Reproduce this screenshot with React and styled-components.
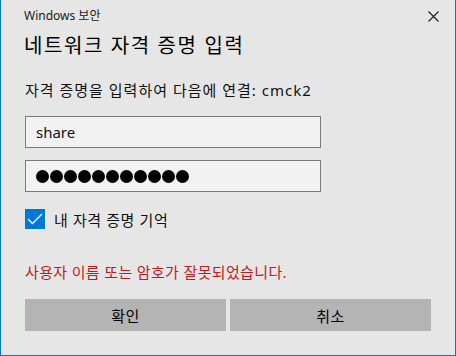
import React from "react";
import styled, { createGlobalStyle } from "styled-components";

const Global = createGlobalStyle`
  html, body { margin: 0; padding: 0; background: #e6e6e6; }
  body { font-family: "Noto Sans", "Noto Sans CJK KR", sans-serif; color: #000; }
  * { box-sizing: border-box; }
`;

const Window = styled.div`
  width: 456px;
  height: 356px;
  background: #e6e6e6;
  border: 1px solid #0078d7;
  border-top: none;
  display: flex;
  flex-direction: column;
  padding: 0 24px 0 24px;
`;

const TitleBar = styled.div`
  display: flex;
  align-items: center;
  justify-content: space-between;
  height: 20px;
  margin-top: 6px;
`;

const TitleText = styled.span`
  font-size: 12px;
  line-height: 20px;
  color: #1a1a1a;
  margin-left: -1px;
`;

const Close = styled.button`
  border: none;
  background: transparent;
  padding: 0;
  width: 11px;
  height: 11px;
  margin-right: -8px;
  display: flex;
  svg { display: block; }
`;

const Heading = styled.h1`
  margin: 6px 0 0 -1px;
  font-size: 20px;
  font-weight: 400;
  line-height: 28px;
  letter-spacing: 1.6px;
  color: #000;
`;

const Subtitle = styled.p`
  margin: 20px 0 0 0;
  font-size: 15px;
  line-height: 20px;
  letter-spacing: 1px;
  color: #111;
`;

const Field = styled.div`
  width: 296px;
  height: 32px;
  border: 1px solid #7a7a7a;
  background: #f2f2f2;
  display: flex;
  align-items: center;
  padding: 0 10px;
  margin-top: ${(p) => p.$top}px;
  font-size: 15px;
  color: #111;
`;

const Dots = styled.div`
  display: flex;
  gap: 1px;
`;

const Dot = styled.span`
  width: 13px;
  height: 13px;
  border-radius: 50%;
  background: #000;
`;

const CheckRow = styled.label`
  display: flex;
  align-items: center;
  gap: 9px;
  margin-top: 17px;
  height: 20px;
  font-size: 15px;
  letter-spacing: 0.6px;
  color: #111;
`;

const Box = styled.span`
  width: 20px;
  height: 20px;
  background: #0078d7;
  display: flex;
  align-items: center;
  justify-content: center;
`;

const ErrorText = styled.p`
  margin: 33px 0 0 0;
  font-size: 15px;
  line-height: 20px;
  letter-spacing: 0.35px;
  color: #c8171b;
`;

const Buttons = styled.div`
  display: grid;
  grid-template-columns: 1fr 1fr;
  gap: 4px;
  margin-top: 17px;
`;

const Button = styled.button`
  height: 32px;
  border: none;
  background: #b4b4b4;
  font-family: inherit;
  font-size: 15px;
  letter-spacing: 0.5px;
  color: #000;
  padding: 0;
`;

export default function App() {
  return (
    <>
      <Global />
      <Window>
        <TitleBar>
          <TitleText>Windows 보안</TitleText>
          <Close aria-label="닫기">
            <svg width="11" height="11" viewBox="0 0 11 11">
              <path d="M0.5 0.5 L10.5 10.5 M10.5 0.5 L0.5 10.5" stroke="#1a1a1a" strokeWidth="1.1" fill="none" />
            </svg>
          </Close>
        </TitleBar>
        <Heading>네트워크 자격 증명 입력</Heading>
        <Subtitle>자격 증명을 입력하여 다음에 연결: cmck2</Subtitle>
        <Field $top={16}>share</Field>
        <Field $top={12}>
          <Dots>
            {Array.from({ length: 11 }).map((_, i) => (
              <Dot key={i} />
            ))}
          </Dots>
        </Field>
        <CheckRow>
          <Box>
            <svg width="16" height="12" viewBox="0 0 16 12">
              <path d="M1 6 L5.5 10.5 L15 1" stroke="#fff" strokeWidth="1.4" fill="none" />
            </svg>
          </Box>
          내 자격 증명 기억
        </CheckRow>
        <ErrorText>사용자 이름 또는 암호가 잘못되었습니다.</ErrorText>
        <Buttons>
          <Button>확인</Button>
          <Button>취소</Button>
        </Buttons>
      </Window>
    </>
  );
}
